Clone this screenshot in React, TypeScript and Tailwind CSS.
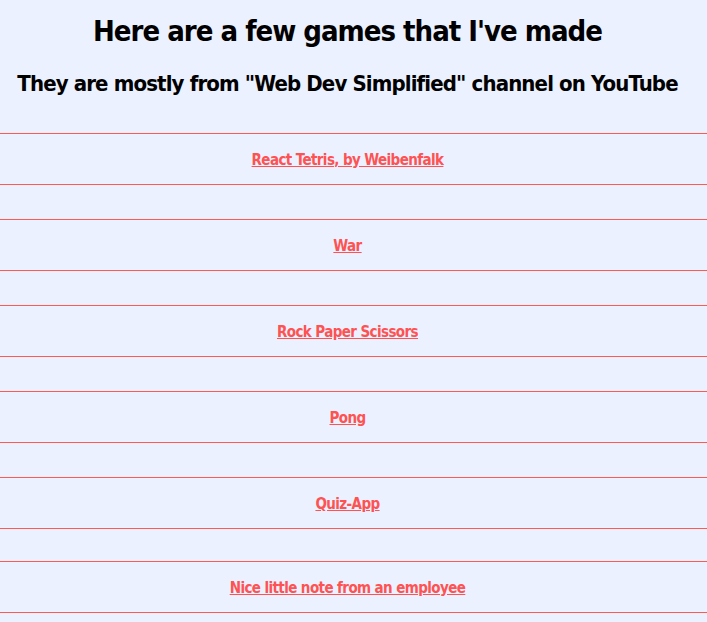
import React from "react";

const games = [
  "React Tetris, by Weibenfalk",
  "War",
  "Rock Paper Scissors",
  "Pong",
  "Quiz-App",
];

export default function App() {
  return (
    <div
      className="min-h-screen bg-[#ebf1fe] text-black pt-[12px] pb-[10px]"
      style={{ fontFamily: '"DejaVu Sans Condensed", "Liberation Sans Narrow", sans-serif' }}
    >
      <div className="pr-[12px] text-center">
        <h1 className="text-[29px] leading-[38px] font-bold tracking-[-1px] whitespace-nowrap">
          Here are a few games that I've made
        </h1>
        <h2 className="mt-[20px] text-[22px] leading-[28px] font-bold tracking-[-0.87px] whitespace-nowrap">
          They are mostly from "Web Dev Simplified" channel on YouTube
        </h2>
      </div>
      <div className="mt-[35px] flex flex-col">
        {games.map((g, i) => (
          <div
            key={g}
            className={`${i > 0 ? "mt-[34px]" : ""} h-[52px] border-y border-[#ff5a4f] flex items-center justify-center pr-[12px] pt-[2px]`}
          >
            <a href="#" className="text-[15px] font-bold tracking-[-0.6px] text-[#ff5252] underline whitespace-nowrap">
              {g}
            </a>
          </div>
        ))}
        <div className="mt-[32px] h-[52px] border-y border-[#ff5a4f] flex items-center justify-center pr-[12px] pt-[2px]">
          <a href="#" className="text-[15px] font-bold tracking-[-0.6px] text-[#ff5252] underline whitespace-nowrap">
            Nice little note from an employee
          </a>
        </div>
      </div>
    </div>
  );
}
